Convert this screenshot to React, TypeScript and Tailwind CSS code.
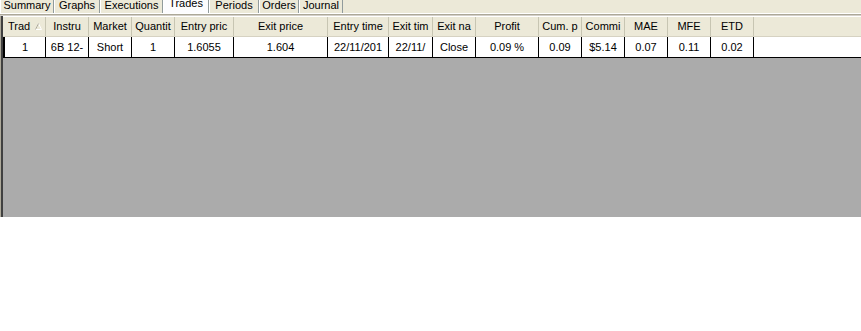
import React from "react";

const tabs = [
  { label: "Summary", w: 54 },
  { label: "Graphs", w: 46 },
  { label: "Executions", w: 63 },
  { label: "Trades", w: 46, active: true },
  { label: "Periods", w: 50 },
  { label: "Orders", w: 40 },
  { label: "Journal", w: 44 },
];

const columns = [
  { head: "Trad", value: "1", w: 41, sort: true },
  { head: "Instru", value: "6B 12-", w: 43 },
  { head: "Market", value: "Short", w: 43 },
  { head: "Quantit", value: "1", w: 43 },
  { head: "Entry pric", value: "1.6055", w: 59 },
  { head: "Exit price", value: "1.604", w: 94 },
  { head: "Entry time", value: "22/11/201", w: 61 },
  { head: "Exit tim", value: "22/11/", w: 44 },
  { head: "Exit na", value: "Close", w: 43 },
  { head: "Profit", value: "0.09 %", w: 63 },
  { head: "Cum. p", value: "0.09", w: 43 },
  { head: "Commi", value: "$5.14", w: 43 },
  { head: "MAE", value: "0.07", w: 43 },
  { head: "MFE", value: "0.11", w: 43 },
  { head: "ETD", value: "0.02", w: 43 },
];

export default function App() {
  return (
    <div className="w-[861px] h-[331px] bg-white overflow-hidden text-[11px] text-black font-['Liberation_Sans',Arial,sans-serif]">
      {/* tab strip, scrolled so the tops are cut */}
      <div className="flex h-[13px] bg-[#ece9d8] overflow-hidden">
        {tabs.map((t) => (
          <div
            key={t.label}
            style={{ width: t.w }}
            className={`shrink-0 border-l border-white border-r border-r-[#919b9c] text-center leading-[13px] ${
              t.active ? "bg-[#fcfcfe] -mt-[3px]" : "-mt-[1px]"
            }`}
          >
            {t.label}
          </div>
        ))}
        <div className="flex-1" />
      </div>
      <div className="h-px bg-white" />
      <div className="h-px bg-[#aca899]" />
      <div className="h-px bg-[#d4d0c8]" />

      {/* grid panel */}
      <div className="flex h-[201px] bg-[#ece9d8]">
        <div className="w-px bg-[#aca899]" />
        <div className="w-[2px] bg-[#404040]" />
        <div className="flex-1 flex flex-col bg-[#ababab]">
          <div className="flex h-[21px] bg-[#ece9d8] border-t border-white border-b border-b-[#d6d2c2]">
            <div className="w-[2px] bg-[#ece9d8]" />
            {columns.map((c) => (
              <div
                key={c.head}
                style={{ width: c.w }}
                className="relative shrink-0 overflow-hidden whitespace-nowrap text-center leading-[19px] border-r border-[#c7c5b2]"
              >
                {c.sort ? (
                  <div className="text-left pl-[3px]">
                    {c.head}
                    <svg className="absolute left-[30px] top-[6px]" width="7" height="7" viewBox="0 0 7 7">
                      <path d="M3.5 0.5 L6.5 6.5 L0.5 6.5 Z" fill="none" stroke="#ffffff" strokeWidth="1" />
                      <path d="M3.5 0.5 L0.5 6.5" fill="none" stroke="#aca899" strokeWidth="1" />
                    </svg>
                  </div>
                ) : (
                  c.head
                )}
              </div>
            ))}
            <div className="flex-1" />
          </div>
          <div className="flex h-[21px] bg-white border-b border-black">
            <div className="w-[2px] bg-black" />
            {columns.map((c) => (
              <div
                key={c.head}
                style={{ width: c.w }}
                className="shrink-0 overflow-hidden whitespace-nowrap text-center leading-[20px] border-r border-black"
              >
                {c.value}
              </div>
            ))}
            <div className="flex-1" />
          </div>
          <div className="flex-1" />
        </div>
      </div>
    </div>
  );
}
